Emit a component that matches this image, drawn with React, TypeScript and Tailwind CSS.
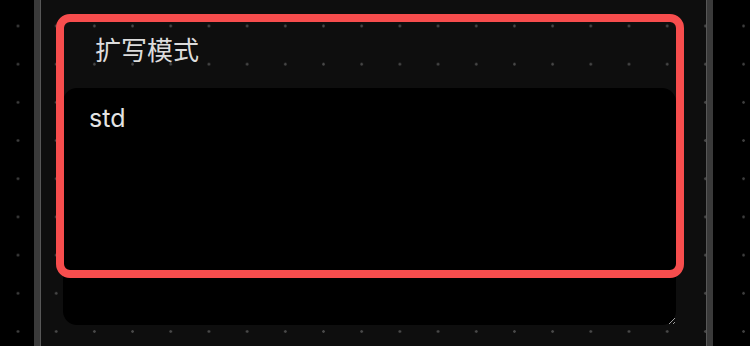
import React from 'react';

const App: React.FC = () => {
    return (
        <div
            className="relative h-[346px] w-[750px] overflow-hidden bg-black bg-[radial-gradient(circle,#3e3e3e_1px,transparent_1.6px)] [background-size:38.2px_38.2px] [background-position:-1.1px_6.9px]"
            style={{ fontFamily: 'Inter, "Noto Sans CJK SC", sans-serif' }}
        >
            {/* Panel */}
            <div className="ml-[34px] h-full w-[679px] border-x-[6px] border-[#3a3a3a]">
                <div className="h-full border-x border-[#575757] bg-white/[0.055] pl-[22px] pr-[30px] pt-[33px]">
                    <div className="h-[36px] pl-[32px] text-[26px] leading-[36px] text-[#dcdcdc]">
                        扩写模式
                    </div>
                    <textarea
                        readOnly
                        value="std"
                        className="mt-[19px] block h-[237px] w-full resize-y rounded-[14px] bg-black pl-[26px] pt-[12px] text-[25px] leading-[36px] text-[#e4e4e4] outline-none [color-scheme:dark]"
                    />
                </div>
            </div>

            {/* Highlight overlay */}
            <div className="pointer-events-none absolute left-[56px] top-[14px] h-[264px] w-[628px] rounded-[14px] border-[8px] border-[#f74d4d]" />
        </div>
    );
};

export default App;
